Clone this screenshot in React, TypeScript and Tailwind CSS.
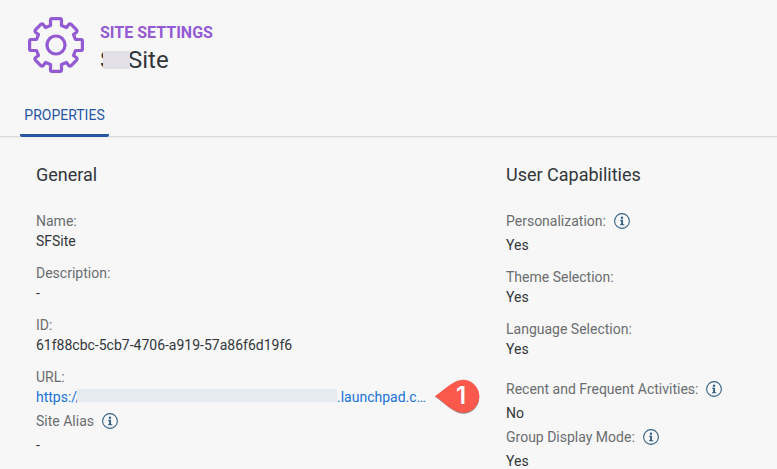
import type { ReactNode } from "react";

function GearIcon() {
  return (
    <svg viewBox="0 0 56 56" className="size-14 shrink-0" fill="none" stroke="#945ad4" strokeWidth="3.2" strokeLinejoin="round" aria-hidden="true">
      <path d="M22.5 8.5V3Q22.5 1.6 24 1.6H32Q33.5 1.6 33.5 3V8.5L38.4 10.5L40.8 7.4Q42 6.4 43.2 7.4L48.6 12.8Q49.6 14 48.6 15.2L45.5 17.6L47.5 22.5H53Q54.4 22.5 54.4 24V32Q54.4 33.5 53 33.5H47.5L45.5 38.4L48.6 40.8Q49.6 42 48.6 43.2L43.2 48.6Q42 49.6 40.8 48.6L38.4 45.5L33.5 47.5V53Q33.5 54.4 32 54.4H24Q22.5 54.4 22.5 53V47.5L17.6 45.5L15.2 48.6Q14 49.6 12.8 48.6L7.4 43.2Q6.4 42 7.4 40.8L10.5 38.4L8.5 33.5H3Q1.6 33.5 1.6 32V24Q1.6 22.5 3 22.5H8.5L10.5 17.6L7.4 15.2Q6.4 14 7.4 12.8L12.8 7.4Q14 6.4 15.2 7.4L17.6 10.5Z" />
      <circle cx="28" cy="28" r="9" />
    </svg>
  );
}

function InfoButton({ label }: { label: string }) {
  return (
    <button type="button" aria-label={label} className="size-4 shrink-0 text-[#346187]">
      <svg viewBox="0 0 16 16" className="size-4" fill="none" aria-hidden="true">
        <circle cx="8" cy="8" r="7.4" stroke="currentColor" strokeWidth="1.1" />
        <circle cx="8" cy="4.7" r="1.2" fill="currentColor" />
        <path d="M6 6.8H9V11.2H10.2V12.2H6V11.2H7.1V7.8H6Z" fill="currentColor" />
      </svg>
    </button>
  );
}

function Field({ label, info, children }: { label: string; info?: boolean; children: ReactNode }) {
  return (
    <div className="leading-5">
      <dt className={info ? "flex h-7 items-center gap-2 text-[#6a6d70]" : "text-[#6a6d70]"}>
        {label}
        {info && <InfoButton label={`About ${label}`} />}
      </dt>
      <dd>{children}</dd>
    </div>
  );
}

function StepMarker() {
  return (
    <span className="absolute top-1/2 left-full ml-1 h-9 w-12 -translate-y-1/2">
      <svg viewBox="0 0 48 36" className="h-9 w-12" aria-hidden="true">
        <path d="M2 17.8C12 12.3 21 1.8 30 1.8A16.3 16.5 0 0 1 30 34.8C21 34.8 12 24.3 2 17.8Z" fill="#666" opacity="0.75" />
        <path d="M2 17C11 11.5 20 .8 30 .8A16.3 16.5 0 0 1 30 33.8C20 33.8 11 23.5 2 17Z" fill="#fc594d" />
      </svg>
      <span className="absolute top-0 right-3 flex h-[34px] w-4 items-center justify-center font-[Inter,sans-serif] text-2xl font-semibold text-white">
        1
      </span>
    </span>
  );
}

export default function App() {
  return (
    <div className="h-screen overflow-hidden bg-[#f7f7f7] font-[Roboto,sans-serif] text-sm text-[#32363a]">
      <header className="border-b border-[#d9d9d9] shadow-xs">
        <div className="flex gap-4 px-7 pt-[17px]">
          <GearIcon />
          <div className="pt-1">
            <p className="text-base leading-6 font-bold text-[#945ad4]">SITE SETTINGS</p>
            <h1 className="flex items-center text-2xl leading-[30px]">
              <span className="w-[3px]">S</span>
              <span className="relative h-[18px] w-[27px] bg-[#e2dfe7]" />
              <span className="-ml-0.5">Site</span>
            </h1>
          </div>
        </div>
        <nav className="mt-[22px] flex px-5" role="tablist">
          <button type="button" role="tab" aria-selected="true" className="-mb-px min-w-[89px] rounded-b-xs border-b-3 border-[#2855a4] px-[3px] pt-2 pb-[9px] leading-5 text-[#2855a4]">
            PROPERTIES
          </button>
        </nav>
      </header>
      <main className="grid grid-cols-[470px_1fr] px-9 pt-[26px]">
        <section>
          <h2 className="text-lg leading-6">General</h2>
          <dl className="flex flex-col pt-6">
            <div className="flex flex-col gap-3">
              <Field label="Name:">SFSite</Field>
              <Field label="Description:">-</Field>
              <Field label="ID:">61f88cbc-5cb7-4706-a919-57a86f6d19f6</Field>
              <Field label="URL:">
                <span className="relative inline-flex w-[393px] align-top">
                  <a href="#site" className="flex w-full text-[#1872d9]">
                    <span className="w-[41px]">https://</span>
                    <span className="relative mt-0.5 h-[13px] w-[260px] bg-[#e6eaf1]" />
                    <span>.launchpad.c…</span>
                  </a>
                  <StepMarker />
                </span>
              </Field>
            </div>
            <Field label="Site Alias" info>-</Field>
          </dl>
        </section>
        <section>
          <h2 className="text-lg leading-6">User Capabilities</h2>
          <dl className="flex flex-col gap-4 pt-5">
            <div className="flex flex-col gap-3">
              <Field label="Personalization:" info>Yes</Field>
              <Field label="Theme Selection:">Yes</Field>
              <Field label="Language Selection:">Yes</Field>
            </div>
            <div>
              <Field label="Recent and Frequent Activities:" info>No</Field>
              <Field label="Group Display Mode:" info>Yes</Field>
            </div>
          </dl>
        </section>
      </main>
    </div>
  );
}
